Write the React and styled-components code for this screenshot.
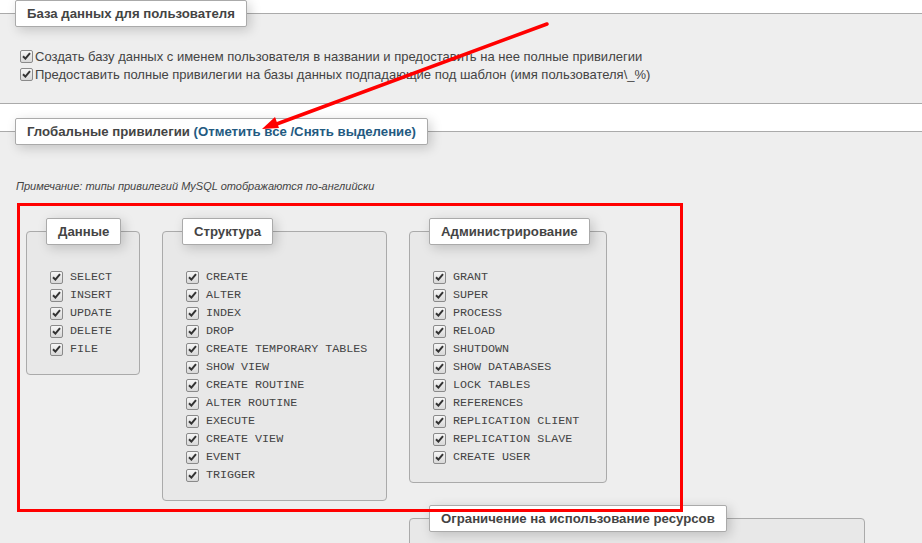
import React from "react";
import styled, { createGlobalStyle } from "styled-components";

const Global = createGlobalStyle`
  html, body { margin: 0; padding: 0; overflow: hidden; background: #fff; }
  body { font-family: "Liberation Sans", Arial, sans-serif; font-size: 13px; color: #444; }
`;

const Page = styled.div`
  position: relative;
  width: 922px;
  height: 543px;
  overflow: hidden;
`;

const Section = styled.fieldset`
  margin: ${(p) => p.$top}px 0 0 0;
  padding: ${(p) => p.$pad};
  min-width: 0;
  border: 0;
  border-top: 1px solid #aaa;
  border-bottom: ${(p) => (p.$open ? "0" : "1px solid #aaa")};
  background: #eee;
`;

const Legend = styled.legend`
  margin-left: ${(p) => p.$ml || 15}px;
  padding: 4px 11px 4px;
  background: #fff;
  border: 1px solid #aaa;
  border-radius: 2px;
  box-shadow: 3px 3px 12px rgba(0, 0, 0, 0.18);
  font-weight: bold;
  font-size: 13.2px;
  line-height: 17px;
  color: #444;
  white-space: nowrap;
`;

const LinkText = styled.span`
  color: #235a81;
`;

const CheckList = styled.div`
  display: flex;
  flex-direction: column;
  padding-left: ${(p) => p.$pl}px;
`;

const Row = styled.label`
  display: flex;
  align-items: center;
  height: 18px;
  gap: ${(p) => p.$gap}px;
  white-space: nowrap;
`;

const Box = styled.span`
  flex: none;
  width: 13px;
  height: 13px;
  box-sizing: border-box;
  border: 1px solid #8a8a8a;
  border-radius: 2px;
  background: linear-gradient(#f6f6f6, #d8d8d8);
  display: flex;
  align-items: center;
  justify-content: center;
`;

const Check = () => (
  <Box>
    <svg width="9" height="8" viewBox="0 0 9 8">
      <path d="M1 4.2 L3.4 6.6 L8 1.2" fill="none" stroke="#333" strokeWidth="2" />
    </svg>
  </Box>
);

const Mono = styled.span`
  font-family: "Liberation Mono", "Courier New", monospace;
  font-size: 11.7px;
  color: #444;
`;

const Note = styled.p`
  margin: 35px 0 0 16px;
  font-size: 11px;
  line-height: 13px;
  font-style: italic;
  color: #444;
`;

const Groups = styled.div`
  padding: 25px 0 0 26px;
`;

const Group = styled.fieldset`
  float: left;
  box-sizing: border-box;
  width: ${(p) => p.$w}px;
  margin: 0 22px 22px 0;
  padding: 23px 0 16px 0;
  min-width: 0;
  border: 1px solid #aaa;
  border-radius: 4px;
  background: #e8e8e8;
  min-height: ${(p) => p.$h || 0}px;
`;

const RedFrame = styled.div`
  position: absolute;
  left: 17px;
  top: 203px;
  width: 666px;
  height: 309px;
  box-sizing: border-box;
  border: 3px solid #f00;
  pointer-events: none;
`;

const ArrowLayer = styled.svg`
  position: absolute;
  left: 0;
  top: 0;
  pointer-events: none;
`;

const dataPrivs = ["SELECT", "INSERT", "UPDATE", "DELETE", "FILE"];
const structPrivs = [
  "CREATE",
  "ALTER",
  "INDEX",
  "DROP",
  "CREATE TEMPORARY TABLES",
  "SHOW VIEW",
  "CREATE ROUTINE",
  "ALTER ROUTINE",
  "EXECUTE",
  "CREATE VIEW",
  "EVENT",
  "TRIGGER",
];
const adminPrivs = [
  "GRANT",
  "SUPER",
  "PROCESS",
  "RELOAD",
  "SHUTDOWN",
  "SHOW DATABASES",
  "LOCK TABLES",
  "REFERENCES",
  "REPLICATION CLIENT",
  "REPLICATION SLAVE",
  "CREATE USER",
];

const PrivGroup = ({ title, items, w }) => (
  <Group $w={w}>
    <Legend $ml={19}>{title}</Legend>
    <CheckList $pl={23}>
      {items.map((it) => (
        <Row key={it} $gap={7}>
          <Check />
          <Mono>{it}</Mono>
        </Row>
      ))}
    </CheckList>
  </Group>
);

export default function App() {
  return (
    <Page>
      <Global />
      <Section $top={0} $pad="20px 0 20px 0">
        <Legend>База данных для пользователя</Legend>
        <CheckList $pl={20}>
          <Row $gap={2}>
            <Check />
            <span>Создать базу данных с именем пользователя в названии и предоставить на нее полные привилегии</span>
          </Row>
          <Row $gap={2}>
            <Check />
            <span>Предоставить полные привилегии на базы данных подпадающие под шаблон (имя пользователя\_%)</span>
          </Row>
        </CheckList>
      </Section>
      <Section $top={14} $pad="0" $open>
        <Legend>
          Глобальные привилегии <LinkText>(Отметить все /Снять выделение)</LinkText>
        </Legend>
        <Note>Примечание: типы привилегий MySQL отображаются по-английски</Note>
        <Groups>
          <PrivGroup title="Данные" items={dataPrivs} w={114} />
          <PrivGroup title="Структура" items={structPrivs} w={225} />
          <PrivGroup title="Администрирование" items={adminPrivs} w={198} />
          <Group $w={456} $h={120}>
            <Legend $ml={19}>Ограничение на использование ресурсов</Legend>
          </Group>
        </Groups>
      </Section>
      <RedFrame />
      <ArrowLayer width="922" height="543">
        <line x1="547" y1="24" x2="274" y2="125" stroke="#f00" strokeWidth="3.5" strokeLinecap="round" />
        <polygon points="262,129 279,128 275,117" fill="#f00" />
      </ArrowLayer>
    </Page>
  );
}
